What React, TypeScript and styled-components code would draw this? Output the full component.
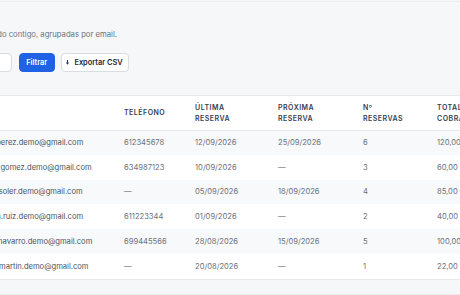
import React from 'react'
import styled, { createGlobalStyle } from 'styled-components'

const GlobalStyle = createGlobalStyle`
  html, body {
    margin: 0;
    background: #f6f7f9;
    overflow: hidden;
  }
  body {
    font-family: Inter, 'Noto Sans', sans-serif;
    -webkit-font-smoothing: antialiased;
  }
`

type Client = {
  email: string
  phone: string
  last: string
  next: string
  count: number
  total: string
}

const clients: Client[] = [
  { email: 'maria.perez.demo@gmail.com', phone: '612345678', last: '12/09/2026', next: '25/09/2026', count: 6, total: '120,00 €' },
  { email: 'marcel.gomez.demo@gmail.com', phone: '634987123', last: '10/09/2026', next: '—', count: 3, total: '60,00 €' },
  { email: 'adrian.soler.demo@gmail.com', phone: '—', last: '05/09/2026', next: '18/09/2026', count: 4, total: '85,00 €' },
  { email: 'adriana.ruiz.demo@gmail.com', phone: '611223344', last: '01/09/2026', next: '—', count: 2, total: '40,00 €' },
  { email: 'alvaro.navarro.demo@gmail.com', phone: '699445566', last: '28/08/2026', next: '15/09/2026', count: 5, total: '100,00 €' },
  { email: 'ramon.martin.demo@gmail.com', phone: '—', last: '20/08/2026', next: '—', count: 1, total: '22,00 €' },
]

const Page = styled.div`
  min-height: 295px;
`

const TopRule = styled.div`
  height: 1px;
  margin-top: 1px;
  background: #eaecf0;
`

const Content = styled.div`
  margin-left: -36px;
  width: 620px;
  padding-top: 28px;
`

const SubtitleRow = styled.div`
  display: flex;
  justify-content: flex-end;
  width: 153px;
  white-space: nowrap;
`

const Subtitle = styled.p`
  margin: 0;
  font-size: 7.7px;
  line-height: 10px;
  color: #6b7280;
`

const Toolbar = styled.div`
  display: flex;
  align-items: center;
  margin-top: 12px;
  height: 20px;
`

const SearchInput = styled.div`
  width: 48px;
  height: 19px;
  background: #fff;
  border: 1px solid #d9dce1;
  border-radius: 4px;
  box-sizing: border-box;
`

const Button = styled.button<{ $primary?: boolean }>`
  display: inline-flex;
  align-items: center;
  justify-content: center;
  gap: 5px;
  height: 19px;
  padding: 0;
  box-sizing: border-box;
  border-radius: 4px;
  font-family: inherit;
  font-size: 7.4px;
  font-weight: 600;
  cursor: pointer;
  color: ${p => (p.$primary ? '#fff' : '#1f2937')};
  background: ${p => (p.$primary ? '#1f62e6' : '#fff')};
  border: 1px solid ${p => (p.$primary ? '#1f62e6' : '#d9dce1')};
`

const FilterButton = styled(Button)`
  width: 35.5px;
  margin-left: 7px;
`

const ExportButton = styled(Button)`
  width: 68px;
  margin-left: 6px;
`

const Card = styled.div`
  margin-top: 23px;
  background: #fff;
  border: 1px solid #e6e8ec;
  border-radius: 6px;
  overflow: hidden;
`

const Table = styled.table`
  width: 582px;
  border-collapse: collapse;
  table-layout: fixed;
`

const Th = styled.th<{ $w: number }>`
  width: ${p => p.$w}px;
  height: 34px;
  padding: 0 0 0 10px;
  text-align: left;
  vertical-align: middle;
  font-size: 7px;
  line-height: 11px;
  font-weight: 600;
  letter-spacing: 0.5px;
  color: #374151;
  border-bottom: 1px solid #e6e8ec;
  box-sizing: border-box;
`

const Row = styled.tr<{ $striped: boolean }>`
  height: 24.8px;
  background: ${p => (p.$striped ? '#f8f9fa' : '#fff')};
`

const Td = styled.td<{ $strong?: boolean }>`
  padding: 0 0 0 ${p => (p.$strong ? 9 : 10)}px;
  font-size: 7.6px;
  white-space: nowrap;
  overflow: hidden;
  color: ${p => (p.$strong ? '#4b5563' : '#6b7280')};
`

const FooterRule = styled.div`
  margin-top: 14px;
  height: 1px;
  background: #eaecf0;
`

const DownArrow = () => (
  <svg width='3' height='5' viewBox='0 0 3 5'>
    <rect x='1' y='0' width='1' height='2.6' fill='#1f2937' />
    <polygon points='0,2.4 3,2.4 1.5,4.8' fill='#1f2937' />
  </svg>
)

export default function App() {
  return (
    <Page>
      <GlobalStyle />
      <TopRule />
      <Content>
        <SubtitleRow>
          <Subtitle>Clientes que han reservado contigo, agrupadas por email.</Subtitle>
        </SubtitleRow>
        <Toolbar>
          <SearchInput />
          <FilterButton $primary>Filtrar</FilterButton>
          <ExportButton>
            <DownArrow />
            Exportar CSV
          </ExportButton>
        </Toolbar>
        <Card>
          <Table>
            <thead>
              <tr>
                <Th $w={149}>EMAIL</Th>
                <Th $w={71}>TELÉFONO</Th>
                <Th $w={83}>ÚLTIMA<br />RESERVA</Th>
                <Th $w={85}>PRÓXIMA<br />RESERVA</Th>
                <Th $w={74}>Nº<br />RESERVAS</Th>
                <Th $w={120}>TOTAL<br />COBRADO</Th>
              </tr>
            </thead>
            <tbody>
              {clients.map((c, i) => (
                <Row key={c.email} $striped={i % 2 === 0}>
                  <Td $strong>{c.email}</Td>
                  <Td>{c.phone}</Td>
                  <Td>{c.last}</Td>
                  <Td>{c.next}</Td>
                  <Td>{c.count}</Td>
                  <Td>{c.total}</Td>
                </Row>
              ))}
            </tbody>
          </Table>
        </Card>
        <FooterRule />
      </Content>
    </Page>
  )
}
